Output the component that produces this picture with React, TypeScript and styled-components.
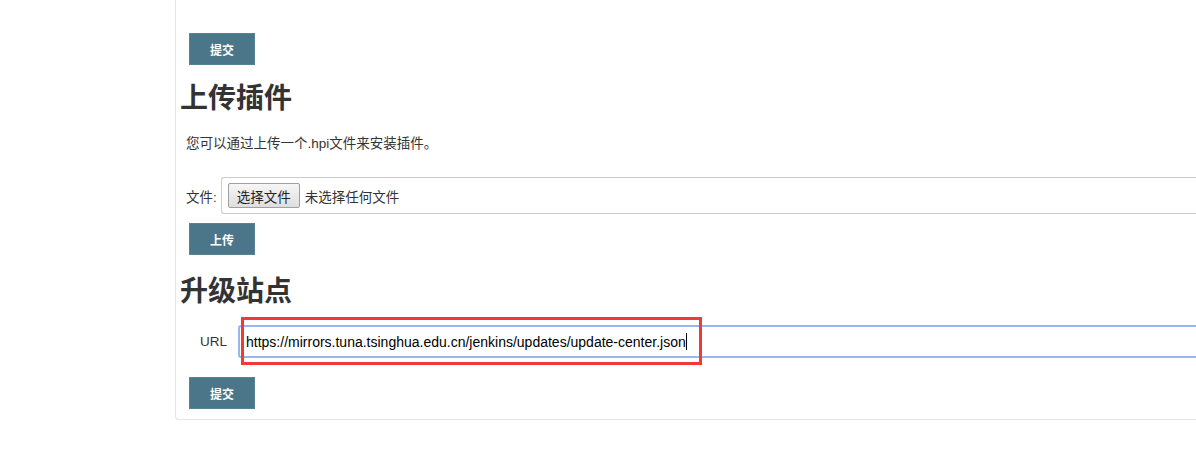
import React from 'react';
import styled, { createGlobalStyle } from 'styled-components';

const GlobalStyle = createGlobalStyle`
  html, body {
    margin: 0;
    padding: 0;
    background: #fff;
  }
  body {
    font-family: "Liberation Sans", Arial, "Noto Sans CJK SC", sans-serif;
    color: #333;
    overflow: hidden;
  }
`;

const Page = styled.div`
  width: 1196px;
  height: 459px;
  padding-left: 175px;
  box-sizing: border-box;
  overflow: hidden;
`;

const Panel = styled.div`
  width: 1100px;
  border-left: 1px solid #e6e6e6;
  border-bottom: 1px solid #e6e6e6;
  border-bottom-left-radius: 4px;
  padding: 33px 0 10px 4px;
  box-sizing: border-box;
`;

const ActionButton = styled.button<{ $top?: number }>`
  display: block;
  margin: ${(p) => p.$top ?? 0}px 0 0 9px;
  width: 66px;
  height: 32px;
  padding: 0;
  background: #4b7588;
  border: 1px solid #5a8396;
  color: #fff;
  font-family: "Liberation Sans", "Noto Sans CJK SC", sans-serif;
  font-size: 12px;
  font-weight: bold;
  cursor: pointer;
`;

const SectionTitle = styled.h2<{ $top: number }>`
  margin: ${(p) => p.$top}px 0 0 0;
  font-size: 28px;
  line-height: 32px;
  font-weight: bold;
  color: #333;
  font-family: "Liberation Sans", "Noto Sans CJK SC", sans-serif;
`;

const Note = styled.p`
  margin: 19px 0 0 6px;
  font-size: 13.5px;
  line-height: 20px;
`;

const FieldRow = styled.div<{ $top: number; $labelPad: number; $gap: number }>`
  position: relative;
  display: flex;
  align-items: center;
  gap: ${(p) => p.$gap}px;
  margin-top: ${(p) => p.$top}px;
  padding-left: ${(p) => p.$labelPad}px;
  font-size: 13.5px;
`;

const FieldLabel = styled.label`
  white-space: nowrap;
`;

const FileBox = styled.div`
  flex: 1;
  display: flex;
  align-items: center;
  gap: 5px;
  height: 37px;
  padding-left: 6px;
  box-sizing: border-box;
  border: 1px solid #ccc;
  border-right: none;
  border-radius: 3px 0 0 3px;
  font-size: 13.5px;
`;

const ChooseButton = styled.button`
  height: 25px;
  padding: 0 8px;
  border: 1px solid #a0a0a0;
  border-radius: 2px;
  background: linear-gradient(#f6f6f6, #dedede);
  color: #222;
  font-family: "Liberation Sans", "Noto Sans CJK SC", sans-serif;
  font-size: 13.5px;
`;

const UrlInput = styled.input`
  flex: 1;
  height: 33px;
  box-sizing: border-box;
  padding: 0 6px;
  border: 2px solid #9ab6ee;
  border-right: none;
  border-radius: 3px 0 0 3px;
  outline: none;
  color: #000;
  font-family: "Liberation Sans", Arial, sans-serif;
  font-size: 14px;
`;

const Caret = styled.span`
  position: absolute;
  left: 506px;
  top: 8px;
  width: 1px;
  height: 17px;
  background: #000;
`;

const Highlight = styled.div`
  position: absolute;
  left: 61px;
  top: -8px;
  width: 461px;
  height: 48px;
  box-sizing: border-box;
  border: 3px solid #f03a3a;
  pointer-events: none;
`;

export default function App() {
  return (
    <Page>
      <GlobalStyle />
      <Panel>
        <ActionButton>提交</ActionButton>
        <SectionTitle $top={18}>上传插件</SectionTitle>
        <Note>您可以通过上传一个.hpi文件来安装插件。</Note>
        <FieldRow $top={23} $labelPad={6} $gap={4}>
          <FieldLabel>文件:</FieldLabel>
          <FileBox>
            <ChooseButton>选择文件</ChooseButton>
            <span>未选择任何文件</span>
          </FileBox>
        </FieldRow>
        <ActionButton $top={9}>上传</ActionButton>
        <SectionTitle $top={21}>升级站点</SectionTitle>
        <FieldRow $top={17} $labelPad={20} $gap={11}>
          <FieldLabel>URL</FieldLabel>
          <UrlInput
            readOnly
            value="https://mirrors.tuna.tsinghua.edu.cn/jenkins/updates/update-center.json"
          />
          <Caret />
          <Highlight />
        </FieldRow>
        <ActionButton $top={19}>提交</ActionButton>
      </Panel>
    </Page>
  );
}
